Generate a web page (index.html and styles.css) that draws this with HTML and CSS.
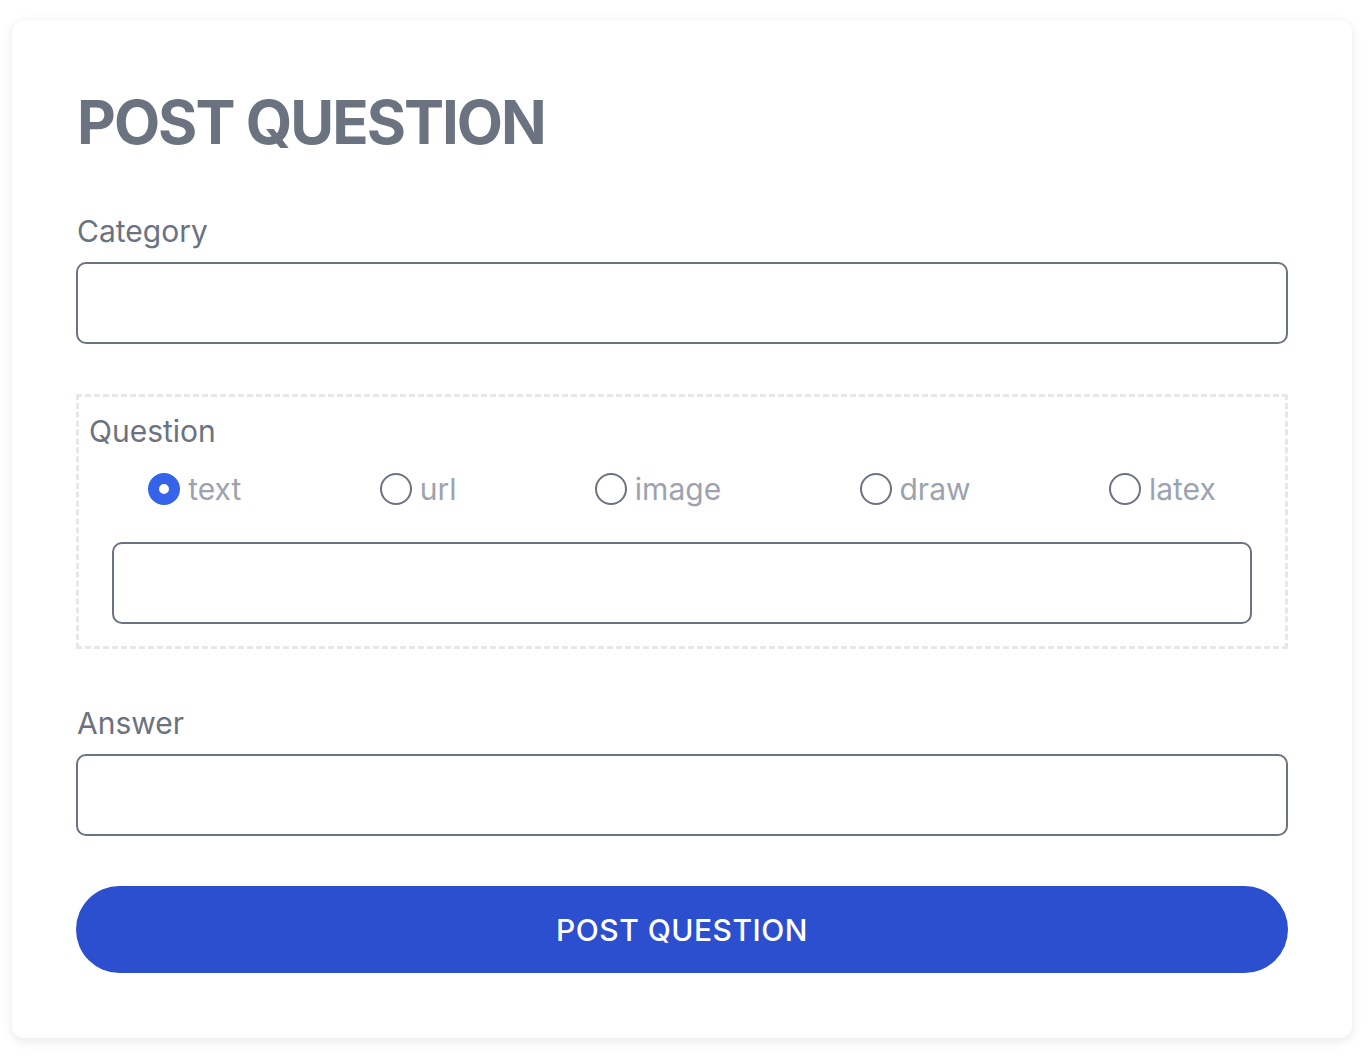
FILE: index.html
```html
<!DOCTYPE html>
<html lang="en">
<head>
<meta charset="utf-8">
<title>Post Question</title>
<link rel="stylesheet" href="styles.css">
</head>
<body>
<div class="card">
  <h1 class="title">POST QUESTION</h1>
  <form class="form">
    <div class="field">
      <label class="label" for="category">Category</label>
      <input class="input" id="category" type="text">
    </div>
    <div class="question-box">
      <div class="label label-q">Question</div>
      <div class="radios">
        <label class="radio-item"><input class="radio" type="radio" name="qtype" checked><span>text</span></label>
        <label class="radio-item"><input class="radio" type="radio" name="qtype"><span>url</span></label>
        <label class="radio-item"><input class="radio" type="radio" name="qtype"><span>image</span></label>
        <label class="radio-item"><input class="radio" type="radio" name="qtype"><span>draw</span></label>
        <label class="radio-item"><input class="radio" type="radio" name="qtype"><span>latex</span></label>
      </div>
      <div class="q-input-wrap">
        <input class="input" type="text">
      </div>
    </div>
    <div class="field field-answer">
      <label class="label" for="answer">Answer</label>
      <input class="input" id="answer" type="text">
    </div>
    <button class="button" type="button">POST QUESTION</button>
  </form>
</div>
</body>
</html>
```
FILE: styles.css
```css
* { box-sizing: border-box; }
html, body { background: #ffffff; }
body {
  margin: 0;
  font-family: Inter, "Noto Sans", "Liberation Sans", sans-serif;
  color: #6b7280;
}
.card {
  margin: 20px 18px 20px 12px;
  background: #ffffff;
  border-radius: 12px;
  box-shadow: 0 3px 12px rgba(0, 0, 0, 0.09), 0 0 2px rgba(0, 0, 0, 0.03);
  padding: 66px 64px 65px 64px;
}
.title {
  margin: 0 0 0 1px;
  font-size: 60px;
  line-height: 72px;
  font-weight: 700;
  color: #6b7280;
  letter-spacing: -2px;
}
.form {
  display: flex;
  flex-direction: column;
  margin-top: 55px;
}
.field {
  display: flex;
  flex-direction: column;
}
.label {
  font-size: 30px;
  line-height: 36px;
  color: #6b7280;
  margin-bottom: 13px;
  padding-left: 1px;
}
.input {
  display: block;
  width: 100%;
  height: 82px;
  border: 2px solid #6b7280;
  border-radius: 10px;
  background: #fff;
  font: inherit;
  outline: none;
}
.question-box {
  margin-top: 50px;
  padding: 16px 0 22px;
  border: 3px dashed #e5e7eb;
}
.label-q {
  margin: 0 0 0 9px;
}
.radios {
  display: flex;
  justify-content: space-around;
  align-items: center;
  margin-top: 22px;
  height: 36px;
}
.radio-item {
  display: flex;
  align-items: center;
  gap: 8px;
  font-size: 30px;
  line-height: 36px;
  color: #9ca3af;
}
.radio {
  appearance: none;
  -webkit-appearance: none;
  margin: 0;
  width: 32px;
  height: 32px;
  border-radius: 50%;
  border: 2px solid #6b7280;
  background: #fff;
  flex: none;
}
.radio:checked {
  border: 11px solid #3563e9;
  background: #fff;
}
.q-input-wrap {
  padding: 0 33px;
  margin-top: 35px;
}
.field-answer {
  margin-top: 56px;
}
.button {
  margin-top: 50px;
  height: 87px;
  border: none;
  border-radius: 44px;
  background: #2b4fcf;
  color: #ffffff;
  font-family: Inter, "Noto Sans", "Liberation Sans", sans-serif;
  font-size: 30px;
  font-weight: 500;
  letter-spacing: 0.5px;
  cursor: pointer;
}
```
